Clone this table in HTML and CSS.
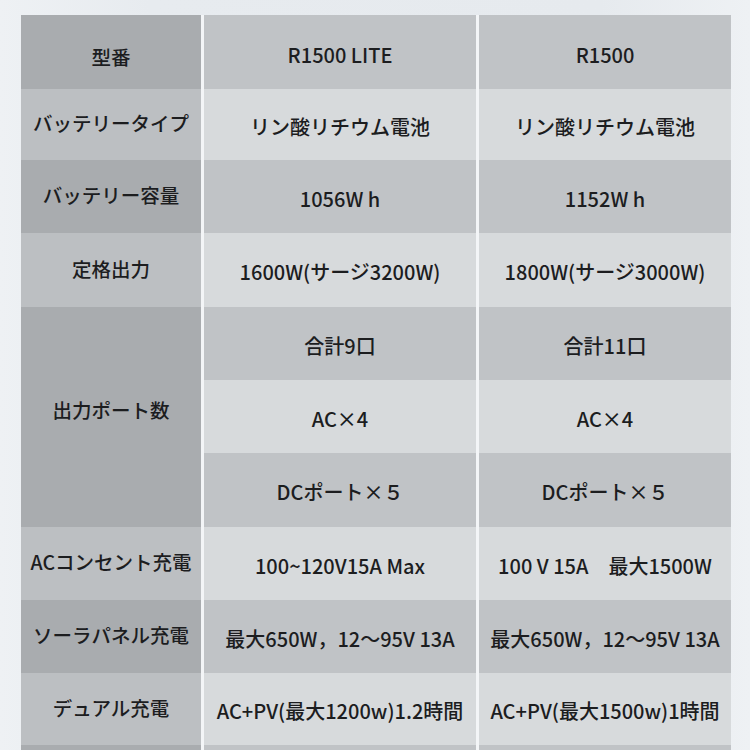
FILE: index.html
```html
<!DOCTYPE html>
<html lang="ja">
<head>
<meta charset="utf-8">
<link rel="stylesheet" href="styles.css">
</head>
<body>
<div class="page">
  <div class="spec">
    <div class="c h dark r1">型番</div>
    <div class="c v mid r1">R1500 LITE</div>
    <div class="c v mid r1">R1500</div>

    <div class="c h light r2">バッテリータイプ</div>
    <div class="c v pale r2">リン酸リチウム電池</div>
    <div class="c v pale r2">リン酸リチウム電池</div>

    <div class="c h dark r3">バッテリー容量</div>
    <div class="c v mid r3">1056W h</div>
    <div class="c v mid r3">1152W h</div>

    <div class="c h light r4">定格出力</div>
    <div class="c v pale r4">1600W(サージ3200W)</div>
    <div class="c v pale r4">1800W(サージ3000W)</div>

    <div class="c h dark span3">出力ポート数</div>
    <div class="c v mid r5">合計9口</div>
    <div class="c v mid r5">合計11口</div>
    <div class="c v pale r6">AC×4</div>
    <div class="c v pale r6">AC×4</div>
    <div class="c v mid r7">DCポート×５</div>
    <div class="c v mid r7">DCポート×５</div>

    <div class="c h light r8">ACコンセント充電</div>
    <div class="c v pale r8">100~120V15A Max</div>
    <div class="c v pale r8">100 V 15A　最大1500W</div>

    <div class="c h dark r9">ソーラパネル充電</div>
    <div class="c v mid r9">最大650W，12〜95V 13A</div>
    <div class="c v mid r9">最大650W，12〜95V 13A</div>

    <div class="c h light r10">デュアル充電</div>
    <div class="c v pale r10">AC+PV(最大1200w)1.2時間</div>
    <div class="c v pale r10">AC+PV(最大1500w)1時間</div>

    <div class="c h dark r11"></div>
    <div class="c v mid r11"></div>
    <div class="c v mid r11"></div>
  </div>
</div>
</body>
</html>
```

FILE: styles.css
```css
html, body {
  margin: 0;
  padding: 0;
  width: 750px;
  height: 750px;
  overflow: hidden;
}
body {
  background: linear-gradient(90deg, #eef1f4 0%, #e7ebef 20%, #e6eaee 80%, #eef1f4 100%);
  font-family: "Noto Sans CJK JP", "Noto Sans", sans-serif;
  font-weight: 500;
  color: #1c1d1f;
}
.page {
  padding: 15px 0 0 21px;
}
.spec {
  display: grid;
  grid-template-columns: 180px 272px 252px;
  grid-template-rows: 74px 71px 73px 74px 73px 73px 74px 73px 73px 72px 73px;
  column-gap: 3px;
  width: 710px;
  background: #f3f5f7;
}
.c {
  display: flex;
  align-items: center;
  justify-content: center;
  text-align: center;
  white-space: nowrap;
}
.h {
  font-size: 19.5px;
  padding-bottom: 4px;
  box-sizing: border-box;
}
.v {
  font-size: 20px;
  padding-top: 3px;
  box-sizing: border-box;
}
.dark { background: #a9acaf; }
.light { background: #bcbfc2; }
.mid { background: #c0c3c6; }
.pale { background: #d7dadc; }
.span3 { grid-row: span 3; padding-bottom: 16px; }
.r1.h { padding-bottom: 0; padding-top: 8px; }
.r1.v { padding-top: 4px; }
```
